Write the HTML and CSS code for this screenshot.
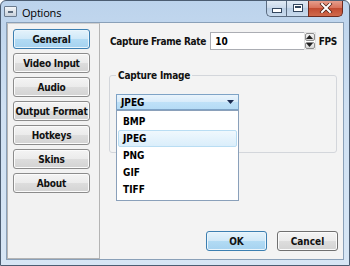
FILE: index.html
```html
<!DOCTYPE html>
<html>
<head>
  <title>Options</title>
  <link rel="stylesheet" href="styles.css">
</head>
<body>
  <div class="window">
    <div class="titlebar">
      <div class="sysicon"><span></span></div>
      <div class="title">Options</div>
      <div class="caption-buttons">
        <div class="cap min"><span class="bar"></span></div>
        <div class="cap max"><span class="box"></span></div>
        <div class="cap close">
          <svg width="14" height="10" viewBox="0 0 14 10">
            <path d="M3 1 L11 9 M11 1 L3 9" stroke="#4a1d14" stroke-width="3.4" stroke-linecap="square"/>
            <path d="M3 1 L11 9 M11 1 L3 9" stroke="#fff" stroke-width="2" stroke-linecap="square"/>
          </svg>
        </div>
      </div>
    </div>

    <div class="client">
      <div class="sidebar">
        <button class="nav active">General</button>
        <button class="nav">Video Input</button>
        <button class="nav">Audio</button>
        <button class="nav">Output Format</button>
        <button class="nav">Hotkeys</button>
        <button class="nav">Skins</button>
        <button class="nav">About</button>
      </div>

      <div class="main">
        <div class="rate-row">
          <label class="label">Capture Frame Rate</label>
          <div class="spin-input">
            <div class="value">10</div>
            <div class="spinner">
              <div class="spin up"><svg width="7" height="4" viewBox="0 0 7 4"><path d="M0 4 L3.5 0 L7 4 Z" fill="#222"/></svg></div>
              <div class="spin down"><svg width="7" height="4" viewBox="0 0 7 4"><path d="M0 0 L3.5 4 L7 0 Z" fill="#222"/></svg></div>
            </div>
          </div>
          <span class="label unit">FPS</span>
        </div>

        <fieldset class="group">
          <legend>Capture Image</legend>
          <div class="combo-wrap">
            <div class="combo">
              <span>JPEG</span>
              <svg width="7" height="4" viewBox="0 0 7 4"><path d="M0 0 L3.5 4 L7 0 Z" fill="#1a2a50"/></svg>
            </div>
            <ul class="dropdown">
              <li>BMP</li>
              <li class="hover">JPEG</li>
              <li>PNG</li>
              <li>GIF</li>
              <li>TIFF</li>
            </ul>
          </div>
        </fieldset>

        <div class="footer">
          <button class="btn primary">OK</button>
          <button class="btn">Cancel</button>
        </div>
      </div>
    </div>
  </div>
</body>
</html>
```

FILE: styles.css
```css
body {
  margin: 0;
  padding: 0;
  background-color: #fff;
  font-family: "Liberation Sans", Arial, sans-serif;
}

.window {
  width: 350px;
  height: 266px;
  box-sizing: border-box;
  display: flex;
  flex-direction: column;
  background: linear-gradient(to bottom, #bcd3ec 0%, #cfe0f2 40%, #d7e6f5 100%);
  border: 1px solid #4c5d72;
  border-radius: 6px 6px 0 0;
  overflow: hidden;
}

.titlebar {
  height: 21px;
  display: flex;
  align-items: flex-start;
}

.sysicon {
  width: 11px;
  height: 9px;
  margin: 5px 0 0 3px;
  border: 1px solid #6b7b8e;
  background: linear-gradient(#f4f6f8, #c9d2dc);
  border-radius: 1px;
  display: flex;
  align-items: center;
  justify-content: center;
}

.sysicon span {
  width: 5px;
  height: 2px;
  background: #5b6a7c;
}

.title {
  margin: 4px 0 0 5px;
  font-family: "Open Sans", "Noto Sans", sans-serif;
  font-size: 11px;
  letter-spacing: -0.2px;
  color: #000;
}

.caption-buttons {
  margin-left: auto;
  margin-right: 6px;
  display: flex;
  height: 17px;
  margin-top: -1px;
}

.cap {
  height: 16px;
  display: flex;
  align-items: center;
  justify-content: center;
  border: 1px solid #5a6b80;
  border-top: none;
  background: linear-gradient(#e4edf6 0%, #cad9ea 50%, #b9cde3 51%, #c9dbee 100%);
}

.min {
  width: 19px;
  border-radius: 0 0 0 5px;
  border-right: none;
}

.max {
  width: 21px;
  border-right: none;
}

.close {
  width: 33px;
  border-radius: 0 0 5px 0;
  background: linear-gradient(#e8a493 0%, #d8715a 50%, #c14a30 51%, #d06a4c 100%);
  border-color: #6e2a1e;
}

.bar {
  width: 8px;
  height: 3px;
  margin-top: 4px;
  background: #fff;
  border: 1px solid #33465e;
}

.box {
  width: 8px;
  height: 6px;
  background: #fff;
  border: 1px solid #33465e;
  box-shadow: inset 0 0 0 1px #fff, inset 0 2px 0 1px #33465e;
}

.client {
  flex: 1;
  display: flex;
  margin: 0 5px 5px 5px;
  border: 1px solid #8aa0b8;
  background-color: #f3f3f3;
  min-width: 0;
}

.sidebar {
  width: 93px;
  flex-shrink: 0;
  box-sizing: border-box;
  display: flex;
  flex-direction: column;
  gap: 4px;
  padding: 5px 0 0 5px;
  background-color: #f2f2f2;
  border: 1px solid #b4b4b4;
  border-top-color: #d0d0d0;
}

.nav {
  width: 77px;
  height: 20px;
  padding: 0;
  font-family: "DejaVu Sans Condensed", "DejaVu Sans", sans-serif;
  font-weight: bold;
  font-size: 10px;
  letter-spacing: -0.2px;
  white-space: nowrap;
  color: #111;
  background: linear-gradient(#f4f4f4 0%, #ebebeb 50%, #dddddd 51%, #d3d3d3 100%);
  border: 1px solid #8c8c8c;
  border-radius: 3px;
  box-shadow: inset 0 0 0 1px #fbfbfb;
}

.nav.active {
  background: linear-gradient(#e5f3fb 0%, #cfe8f8 50%, #b2dbf4 51%, #a5d2f0 100%);
  border-color: #3c7fb1;
  box-shadow: inset 0 0 0 1px #eaf5fc;
}

.main {
  flex: 1;
  min-width: 0;
  display: flex;
  flex-direction: column;
  padding: 9px 6px 8px 10px;
}

.label {
  font-family: "DejaVu Sans Condensed", "DejaVu Sans", sans-serif;
  font-weight: bold;
  font-size: 10px;
  letter-spacing: -0.3px;
  color: #111;
  white-space: nowrap;
}

.rate-row {
  display: flex;
  align-items: center;
  height: 18px;
}

.spin-input {
  flex: 1;
  display: flex;
  margin-left: 4px;
  height: 18px;
}

.value {
  flex: 1;
  box-sizing: border-box;
  padding: 3px 0 0 4px;
  background: #fff;
  border: 1px solid #abadb3;
  border-right: none;
  font-family: "DejaVu Sans Condensed", "DejaVu Sans", sans-serif;
  font-weight: bold;
  font-size: 10px;
}

.spinner {
  width: 12px;
  display: flex;
  flex-direction: column;
  gap: 1px;
  background: #fff;
  border: 1px solid #e0e0e0;
  box-sizing: border-box;
}

.spin {
  flex: 1;
  display: flex;
  align-items: center;
  justify-content: center;
  background: linear-gradient(#f5f5f5, #d6d6d6);
  border: 1px solid #8e8e8e;
  border-radius: 2px;
}

.unit {
  margin-left: 3px;
}

.group {
  margin: 20px 0 0 -1px;
  padding: 13px 0 0 6px;
  height: 68px;
  border: 1px solid #d3d6db;
  border-radius: 3px;
}

.group legend {
  padding: 0 2px;
  margin-left: 0;
  font-family: "DejaVu Sans Condensed", "DejaVu Sans", sans-serif;
  font-weight: bold;
  font-size: 10px;
  letter-spacing: -0.2px;
  color: #111;
}

.combo-wrap {
  position: relative;
  width: 123px;
}

.combo {
  height: 16px;
  box-sizing: border-box;
  display: flex;
  align-items: center;
  justify-content: space-between;
  padding: 0 4px 0 4px;
  border: 1px solid #7ea3c6;
  background: linear-gradient(#eaf4fc 0%, #d7ebfa 50%, #bfe1f8 51%, #b5dbf5 100%);
  font-family: "DejaVu Sans Condensed", "DejaVu Sans", sans-serif;
  font-weight: bold;
  font-size: 10px;
  color: #000;
}

.dropdown {
  position: absolute;
  left: 0;
  top: 16px;
  width: 123px;
  box-sizing: border-box;
  margin: 0;
  padding: 2px 1px 2px 1px;
  list-style: none;
  background: #fff;
  border: 1px solid #8aa0ba;
  z-index: 2;
}

.dropdown li {
  height: 15px;
  line-height: 15px;
  padding-left: 4px;
  font-family: "DejaVu Sans Condensed", "DejaVu Sans", sans-serif;
  font-weight: bold;
  font-size: 10px;
  color: #000;
  border: 1px solid transparent;
  border-radius: 2px;
}

.dropdown li.hover {
  background: linear-gradient(#f0f8fd, #daeefb);
  border-color: #b9ddf3;
}

.footer {
  margin-top: auto;
  display: flex;
  justify-content: flex-end;
  gap: 10px;
  margin-right: -1px;
}

.btn {
  width: 61px;
  height: 20px;
  padding: 0;
  font-family: "DejaVu Sans Condensed", "DejaVu Sans", sans-serif;
  font-weight: bold;
  font-size: 10px;
  color: #111;
  background: linear-gradient(#f4f4f4 0%, #ebebeb 50%, #dddddd 51%, #d3d3d3 100%);
  border: 1px solid #707070;
  border-radius: 3px;
  box-shadow: inset 0 0 0 1px #fbfbfb;
}

.btn.primary {
  background: linear-gradient(#e5f3fb 0%, #cfe8f8 50%, #b2dbf4 51%, #a5d2f0 100%);
  border-color: #3c7fb1;
  box-shadow: inset 0 0 0 1px #eaf5fc;
}
```
